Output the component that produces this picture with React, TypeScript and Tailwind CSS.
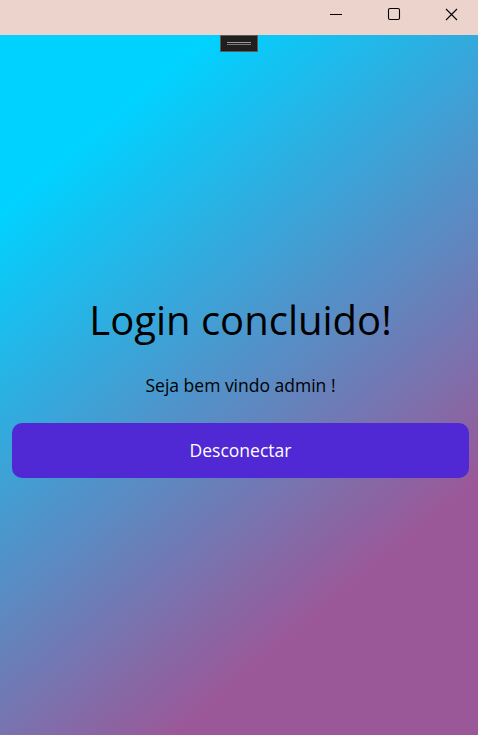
export default function App() {
  return (
    <div className="flex h-[735px] w-[478px] flex-col overflow-hidden font-['Open_Sans',sans-serif]">
      <header className="flex h-[35px] shrink-0 items-start justify-end bg-[#ecd3cc] text-black">
        <div className="flex h-[28px] items-center">
          {/* minimise */}
          <svg width="14" height="14" viewBox="0 0 14 14" className="mr-[44px]">
            <path d="M1 7.5h12" stroke="#000" strokeWidth="1" />
          </svg>
          {/* maximise */}
          <svg width="14" height="14" viewBox="0 0 14 14" className="mr-[44px]">
            <rect x="1.5" y="1.5" width="11" height="11" rx="1.5" fill="none" stroke="#000" strokeWidth="1.1" />
          </svg>
          {/* close */}
          <svg width="13" height="13" viewBox="0 0 13 13" className="mr-[20px]">
            <path d="M1 1l11 11M12 1L1 12" stroke="#000" strokeWidth="1.1" />
          </svg>
        </div>
      </header>

      <main className="relative flex flex-1 flex-col items-center justify-center bg-[linear-gradient(140deg,#00d2ff_16%,#9b5898_77%)] pl-3 pr-[9px]">
        <div className="absolute left-[220px] top-0 flex h-[17px] w-[38px] flex-col items-center justify-center gap-[1px] border border-[#5a5a5a] bg-[#1f1f1f]">
          <span className="h-px w-[24px] bg-[#9a9a9a]" />
          <span className="h-px w-[24px] bg-[#7a7a7a]" />
        </div>

        <h1 className="text-[40px] leading-[56px] text-black">Login concluido!</h1>
        <p className="mt-[24px] text-[17.5px] text-black">Seja bem vindo admin !</p>
        <button className="mt-[24px] h-[55px] self-stretch rounded-[10px] bg-[#5029d5] text-[17.5px] text-white">
          Desconectar
        </button>
      </main>
    </div>
  )
}
